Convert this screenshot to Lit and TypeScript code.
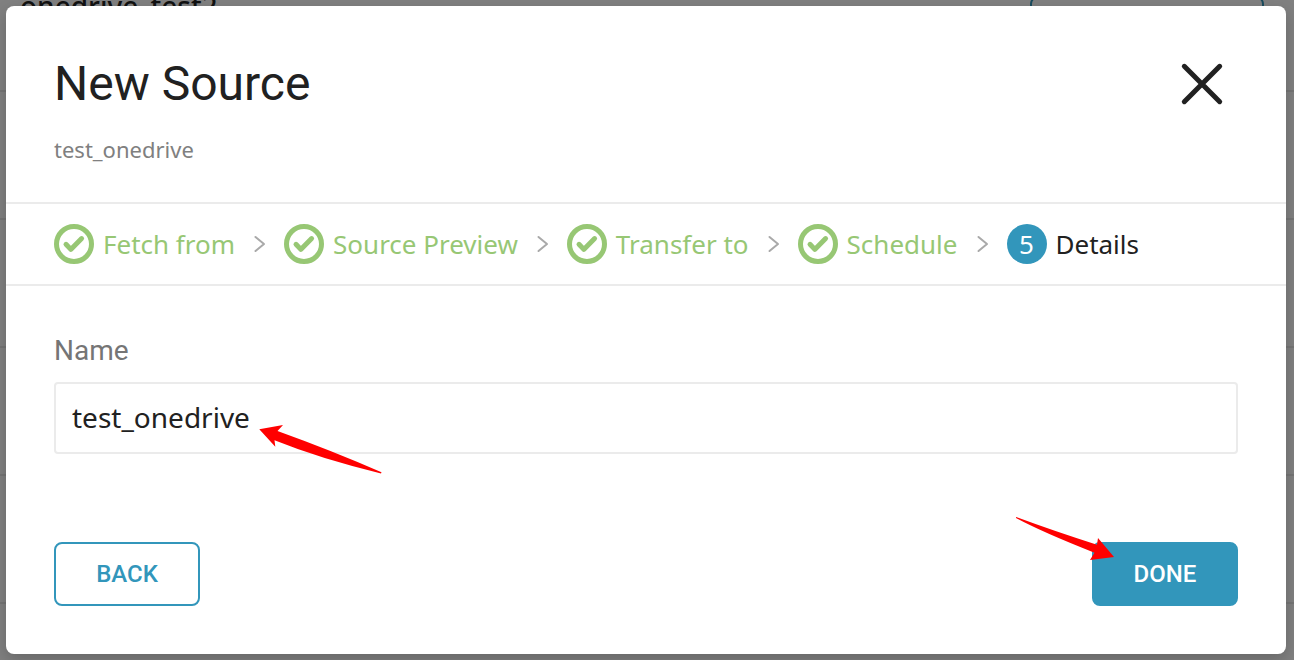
import { LitElement, html, css } from "lit";
import { customElement, property, state } from "lit/decorators.js";

interface Step {
  label: string;
  done: boolean;
}

@customElement("step-item")
class StepItem extends LitElement {
  @property() label = "";
  @property({ type: Number }) number = 1;
  @property({ type: Boolean }) done = false;

  static styles = css`
    :host {
      display: flex;
      align-items: center;
      gap: 9px;
      font-size: 26px;
      line-height: 40px;
      white-space: nowrap;
      color: #212121;
    }
    .done {
      color: #97c774;
    }
    .mark {
      display: block;
      width: 40px;
      height: 40px;
      flex: none;
    }
    .number {
      box-sizing: border-box;
      border-radius: 50%;
      background: #3296bb;
      color: #fff;
      text-align: center;
    }
  `;

  render() {
    return html`
      ${this.done
        ? html`<svg class="mark" viewBox="0 0 40 40" fill="none" aria-hidden="true">
            <circle cx="20" cy="20" r="17.5" stroke="#97c774" stroke-width="5" />
            <path
              d="M12 20.3 L16.8 25.4 L27.6 14.6"
              stroke="#97c774"
              stroke-width="5"
              stroke-linecap="round"
              stroke-linejoin="round"
            />
          </svg>`
        : html`<span class="mark number">${this.number}</span>`}
      <span class=${this.done ? "done" : "current"}>${this.label}</span>
    `;
  }
}

@customElement("app-root")
class AppRoot extends LitElement {
  @state() private name = "test_onedrive";

  private steps: Step[] = [
    { label: "Fetch from", done: true },
    { label: "Source Preview", done: true },
    { label: "Transfer to", done: true },
    { label: "Schedule", done: true },
    { label: "Details", done: false },
  ];

  static styles = css`
    :host {
      display: grid;
      min-height: 100vh;
      overflow: hidden;
      background: #808080;
      color: #212121;
      font-family: "Noto Sans", "Open Sans", sans-serif;
    }
    .page,
    .dialog {
      grid-area: 1 / 1;
      min-width: 0;
    }
    .page {
      height: 100vh;
      overflow: hidden;
    }
    .row {
      box-sizing: border-box;
      height: 128px;
      border-bottom: 2px solid #757575;
    }
    .first {
      display: flex;
      justify-content: space-between;
      align-items: flex-start;
      height: 92px;
      padding: 0 30px 0 20px;
    }
    .source {
      margin-top: -14px;
      font-size: 28px;
      line-height: 40px;
      font-weight: 500;
      color: #111;
    }
    .pill {
      box-sizing: border-box;
      width: 234px;
      height: 64px;
      margin-top: -4px;
      border: 2px solid #194b5e;
      border-radius: 8px;
    }
    .dialog {
      z-index: 1;
      margin: 6px 8px 6px 6px;
      border-radius: 8px;
      background: #fff;
      box-shadow: 0 6px 16px rgba(0, 0, 0, 0.2);
      display: flex;
      flex-direction: column;
    }
    .head {
      display: flex;
      justify-content: space-between;
      align-items: flex-start;
      padding: 48px 60px 36px 48px;
      border-bottom: 2px solid #ebebeb;
    }
    .title {
      margin: 0 0 20px;
      font: 400 48px/60px Roboto, sans-serif;
    }
    .subtitle {
      margin: 0;
      font-size: 22px;
      line-height: 30px;
      padding-bottom: 2px;
      color: #808080;
    }
    .close {
      display: block;
      padding: 6px 0;
      border: 0;
      background: none;
      color: inherit;
      cursor: pointer;
    }
    .close-icon {
      display: block;
      width: 48px;
      height: 48px;
    }
    .steps {
      display: flex;
      align-items: center;
      gap: 18px;
      margin: 0;
      padding: 20px 48px;
      list-style: none;
      border-bottom: 2px solid #ebebeb;
    }
    .step {
      display: flex;
      align-items: center;
      gap: 18px;
    }
    .chevron {
      display: block;
      width: 13px;
      height: 20px;
    }
    .form {
      flex: 1;
      display: flex;
      flex-direction: column;
      padding: 48px;
    }
    .label {
      margin-bottom: 14px;
      font: 400 28px/34px Roboto, sans-serif;
      color: #757575;
    }
    .field {
      position: relative;
    }
    .input {
      box-sizing: border-box;
      display: block;
      width: 100%;
      height: 72px;
      padding: 0 16px 2px;
      border: 2px solid #ebebeb;
      border-radius: 4px;
      background: #fff;
      color: #212121;
      font-family: inherit;
      font-size: 28px;
      outline: none;
    }
    .actions {
      display: flex;
      justify-content: space-between;
      margin-top: auto;
    }
    .action {
      position: relative;
    }
    .button {
      box-sizing: border-box;
      height: 64px;
      padding: 0 36px;
      min-width: 146px;
      border: 2px solid #3296bb;
      border-radius: 8px;
      background: #fff;
      color: #3296bb;
      font: 500 24px/32px Roboto, sans-serif;
      cursor: pointer;
    }
    .primary {
      background: #3296bb;
      color: #fff;
    }
    .arrow {
      position: absolute;
      display: block;
      width: 124px;
      height: 50px;
      pointer-events: none;
    }
    .arrow-name {
      left: 205px;
      top: 42px;
    }
    .arrow-done {
      right: 122px;
      top: -26px;
    }
  `;

  private onInput(e: Event) {
    this.name = (e.target as HTMLInputElement).value;
  }

  private chevron() {
    return html`<svg class="chevron" viewBox="0 0 13 20" fill="none" aria-hidden="true">
      <path d="M2.5 3 L11 10 L2.5 17" stroke="#a9a9a9" stroke-width="2" stroke-linecap="round" stroke-linejoin="round" />
    </svg>`;
  }

  render() {
    return html`
      <div class="page" aria-hidden="true">
        <div class="row first">
          <span class="source">onedrive_test2</span>
          <span class="pill"></span>
        </div>
        <div class="row"></div>
        <div class="row"></div>
        <div class="row"></div>
        <div class="row"></div>
      </div>
      <section class="dialog" role="dialog" aria-labelledby="title">
        <header class="head">
          <div>
            <h1 class="title" id="title">New Source</h1>
            <p class="subtitle">${this.name}</p>
          </div>
          <button class="close" type="button" aria-label="Close">
            <svg class="close-icon" viewBox="0 0 48 48" fill="none" aria-hidden="true">
              <path
                d="M6.3 6.3 L41.7 41.7 M41.7 6.3 L6.3 41.7"
                stroke="#212121"
                stroke-width="5"
                stroke-linecap="round"
              />
            </svg>
          </button>
        </header>
        <ol class="steps">
          ${this.steps.map(
            (s, i) => html`<li class="step">
              ${i > 0 ? this.chevron() : null}
              <step-item .label=${s.label} .number=${i + 1} .done=${s.done}></step-item>
            </li>`
          )}
        </ol>
        <form class="form" @submit=${(e: Event) => e.preventDefault()}>
          <label class="label" for="name">Name</label>
          <div class="field">
            <input class="input" id="name" type="text" .value=${this.name} @input=${this.onInput} />
            <svg class="arrow arrow-name" viewBox="0 0 124 50" aria-hidden="true">
              <path
                d="M0.3 5.3 L24 1 L18.5 7 Q74 27 122.5 48.3 L122 49.4 Q62 35 15.5 16.3 L16.3 22.7 Z"
                fill="#f00"
              />
            </svg>
          </div>
          <div class="actions">
            <button class="button" type="button">BACK</button>
            <div class="action">
              <button class="button primary" type="submit">DONE</button>
              <svg class="arrow arrow-done" viewBox="0 0 124 50" aria-hidden="true">
                <path
                  d="M122 41 L98 44 L102.5 36.7 Q50 16 24 2 L24.2 1 Q62 15 105 28.7 L106 22 Z"
                  fill="#f00"
                />
              </svg>
            </div>
          </div>
        </form>
      </section>
    `;
  }
}
